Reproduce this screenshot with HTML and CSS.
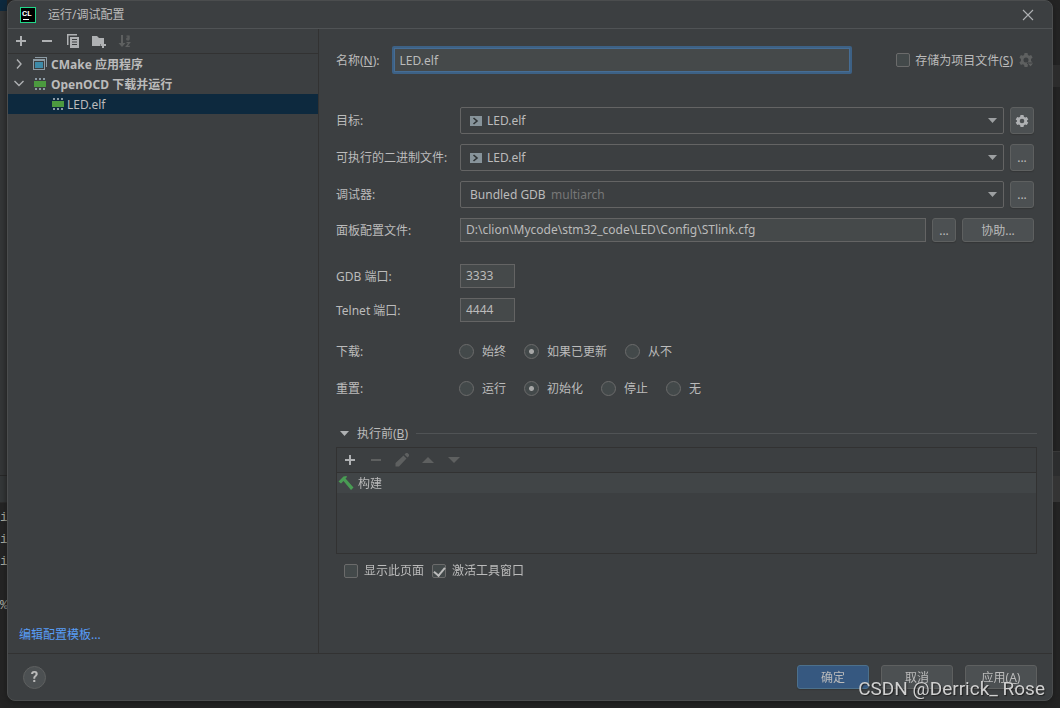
FILE: index.html
```html
<!DOCTYPE html>
<html lang="zh-CN">
<head>
<meta charset="utf-8">
<title>运行/调试配置</title>
<link rel="stylesheet" href="styles.css">
</head>
<body>
<div class="screen">
  <div class="edge edge-left" aria-hidden="true">
    <div class="edge-tab"></div>
    <div class="edge-tree"></div>
    <div class="edge-bar"></div>
    <div class="edge-code"><span>i</span><span>i</span><span>i</span><span></span><span>%</span></div>
  </div>

  <main class="dialog">
    <header class="titlebar">
      <svg class="logo" width="16" height="16" viewBox="0 0 16 16"><rect width="16" height="16" fill="#21d789"/><rect x="1" y="1" width="14" height="14" fill="#000"/><text class="logo-text" x="2" y="9">CL</text><path d="M3 12h6v1H3z" fill="#fff"/></svg>
      <h1 class="title">运行/调试配置</h1>
      <button class="close" aria-label="关闭"><svg width="12" height="12" viewBox="0 0 12 12"><path d="M1 1l10 10M11 1L1 11" stroke="#afb1b3" stroke-width="1.100"/></svg></button>
    </header>

    <div class="content">
      <aside class="sidebar">
        <div class="toolbar side-tools">
          <button class="tool" aria-label="添加"><svg width="16" height="16" viewBox="0 0 16 16"><path d="M7 3h2v4h4v2H9v4H7V9H3V7h4z" fill="#afb1b3"/></svg></button>
          <button class="tool" aria-label="移除"><svg width="16" height="16" viewBox="0 0 16 16"><path d="M3 7h10v2H3z" fill="#afb1b3"/></svg></button>
          <button class="tool" aria-label="复制"><svg width="16" height="16" viewBox="0 0 16 16"><path d="M2 1h10v1.500H3.500V12H2z" fill="#afb1b3"/><path fill-rule="evenodd" d="M5 4h9v11H5zM7 6v1h5V6zm0 2.500v1h5v-1zM7 11v1h5v-1z" fill="#afb1b3"/></svg></button>
          <button class="tool" aria-label="新建文件夹"><svg width="16" height="16" viewBox="0 0 16 16"><path d="M1 3h5l2 2h5v4h-2v2H9v2H1z" fill="#afb1b3"/><path d="M11 9h2v2h2v2h-2v2h-2v-2H9.500v-2H11z" fill="#afb1b3"/></svg></button>
          <button class="tool" aria-label="排序" disabled><svg width="16" height="16" viewBox="0 0 16 16"><path d="M4 2h2v8h2.500L5 14 1.500 10H4z" fill="#5e6060"/><path d="M9.500 3.200H12v3.600M12 5h-1.300a.9.9 0 0 0 0 1.800H12M9.500 9.700h3l-3 3.600h3.300" fill="none" stroke="#5e6060" stroke-width="1.300"/></svg></button>
        </div>
        <ul class="tree">
          <li class="node group">
            <svg width="16" height="16" viewBox="0 0 16 16"><path d="M6 3.500L10 8l-4 4.500" fill="none" stroke="#afb1b3" stroke-width="1.400"/></svg>
            <svg class="node-icon" width="16" height="16" viewBox="0 0 16 16"><path d="M3 1h12v10h-1V2H3z" fill="#8c9ba4"/><path fill-rule="evenodd" d="M1 3h12v11H1zm1 2v8h10V5z" fill="#8c9ba4"/><path d="M3 6h8v6H3z" fill="#3d8aa8"/></svg>
            <span>CMake 应用程序</span>
          </li>
          <li class="node group">
            <svg width="16" height="16" viewBox="0 0 16 16"><path d="M3.500 5L8 9.500 12.500 5" fill="none" stroke="#afb1b3" stroke-width="1.400"/></svg>
            <svg class="node-icon" width="16" height="16" viewBox="0 0 16 16"><path d="M2 5h12v6H2z" fill="#4c9a3f"/><path d="M3 2h2v2H3zm4 0h2v2H7zm4 0h2v2h-2zM3 12h2v2H3zm4 0h2v2H7zm4 0h2v2h-2z" fill="#8c9ba4"/></svg>
            <span>OpenOCD 下载并运行</span>
          </li>
          <li class="node leaf selected">
            <svg class="node-icon" width="16" height="16" viewBox="0 0 16 16"><path d="M2 5h12v6H2z" fill="#4c9a3f"/><path d="M3 2h2v2H3zm4 0h2v2H7zm4 0h2v2h-2zM3 12h2v2H3zm4 0h2v2H7zm4 0h2v2h-2z" fill="#8c9ba4"/></svg>
            <span>LED.elf</span>
          </li>
        </ul>
        <a class="link" href="#">编辑配置模板...</a>
      </aside>

      <form class="form">
        <div class="name-row">
          <label for="name">名称(<u>N</u>):</label>
          <input class="name-input" id="name" type="text" value="LED.elf" autofocus>
          <div class="store">
            <input class="check" id="store" type="checkbox">
            <label for="store">存储为项目文件(<u>S</u>)</label>
            <svg width="16" height="16" viewBox="0 0 16 16"><path fill-rule="evenodd" d="M6.500 1h3l.4 2 1.300.7 1.900-.7 1.500 2.600L13 7v2l1.600 1.400-1.500 2.600-1.900-.7-1.300.7-.4 2h-3l-.4-2-1.300-.7-1.900.7-1.500-2.600L3 9V7L1.400 5.600 2.900 3l1.900.7L6.100 3zM8 5.500a2.500 2.500 0 1 0 0 5 2.500 2.500 0 0 0 0-5z" fill="#5e6060"/><path d="M9 11h7l-3.500 4z" fill="#5e6060" stroke="#3c3f41"/></svg>
          </div>
        </div>

        <div class="fields">
          <label for="target">目标:</label>
          <div class="line">
            <div class="combo">
              <svg width="12" height="10" viewBox="0 0 12 10"><path d="M0 0h12v10H0z" fill="#87939a"/><path d="M3.500 2L7 5 3.500 8" fill="none" stroke="#2f3335" stroke-width="1.600"/></svg>
              <select class="wide" id="target"><option>LED.elf</option></select>
              <svg class="arrow" width="9" height="5" viewBox="0 0 9 5"><path d="M0 0h9L4.500 5z" fill="#9da0a2"/></svg>
            </div>
            <button class="btn square" type="button" aria-label="设置"><svg width="16" height="16" viewBox="0 0 16 16"><path fill-rule="evenodd" d="M6.500 2h3l.4 1.700 1.200.7 1.700-.5 1.500 2.500L13 7.500v1l1.300 1.100-1.500 2.500-1.700-.5-1.200.7-.4 1.700h-3l-.4-1.700-1.200-.7-1.700.5-1.500-2.500L3 8.500v-1L1.700 6.400l1.500-2.500 1.700.5 1.200-.7zM8 5.700a2.300 2.300 0 1 0 0 4.600 2.300 2.300 0 0 0 0-4.600z" fill="#afb1b3"/></svg></button>
          </div>

          <label for="binary">可执行的二进制文件:</label>
          <div class="line">
            <div class="combo">
              <svg width="12" height="10" viewBox="0 0 12 10"><path d="M0 0h12v10H0z" fill="#87939a"/><path d="M3.500 2L7 5 3.500 8" fill="none" stroke="#2f3335" stroke-width="1.600"/></svg>
              <select class="wide" id="binary"><option>LED.elf</option></select>
              <svg class="arrow" width="9" height="5" viewBox="0 0 9 5"><path d="M0 0h9L4.500 5z" fill="#9da0a2"/></svg>
            </div>
            <button class="btn square" type="button">...</button>
          </div>

          <label for="debugger">调试器:</label>
          <div class="line">
            <div class="combo">
              <select id="debugger"><option>Bundled GDB</option></select>
              <span class="hint">multiarch</span>
              <svg class="arrow" width="9" height="5" viewBox="0 0 9 5"><path d="M0 0h9L4.500 5z" fill="#9da0a2"/></svg>
            </div>
            <button class="btn square" type="button">...</button>
          </div>

          <label for="board">面板配置文件:</label>
          <div class="line short">
            <input class="text" id="board" type="text" value="D:\clion\Mycode\stm32_code\LED\Config\STlink.cfg">
            <button class="btn square" type="button">...</button>
            <button class="btn" type="button">协助...</button>
          </div>
        </div>

        <div class="fields ports">
          <label for="gdb">GDB 端口:</label>
          <input class="text port" id="gdb" type="text" value="3333">
          <label for="telnet">Telnet 端口:</label>
          <input class="text port" id="telnet" type="text" value="4444">
        </div>

        <div class="choices">
          <fieldset class="choice">
            <legend class="legend">下载:</legend>
            <label class="option"><input class="radio" type="radio" name="download">始终</label>
            <label class="option"><input class="radio" type="radio" name="download" checked>如果已更新</label>
            <label class="option"><input class="radio" type="radio" name="download">从不</label>
          </fieldset>
          <fieldset class="choice">
            <legend class="legend">重置:</legend>
            <label class="option"><input class="radio" type="radio" name="reset">运行</label>
            <label class="option"><input class="radio" type="radio" name="reset" checked>初始化</label>
            <label class="option"><input class="radio" type="radio" name="reset">停止</label>
            <label class="option"><input class="radio" type="radio" name="reset">无</label>
          </fieldset>
        </div>

        <section class="before">
          <h2 class="before-title"><svg width="9" height="5" viewBox="0 0 9 5"><path d="M0 0h9L4.500 5z" fill="#afb1b3"/></svg><span>执行前(<u>B</u>)</span></h2>
          <div class="tasks">
            <div class="toolbar task-tools">
              <button class="tool" type="button" aria-label="添加"><svg width="16" height="16" viewBox="0 0 16 16"><path d="M7 3h2v4h4v2H9v4H7V9H3V7h4z" fill="#afb1b3"/></svg></button>
              <button class="tool" type="button" aria-label="移除" disabled><svg width="16" height="16" viewBox="0 0 16 16"><path d="M3 7h10v2H3z" fill="#5e6060"/></svg></button>
              <button class="tool" type="button" aria-label="编辑" disabled><svg width="16" height="16" viewBox="0 0 16 16"><path d="M1.500 14.500v-3.500L9.500 3.500 12.500 6.500 5 14.500zM10.500 2.500L12 1h1.500L15 2.500V4l-1.500 1.500z" fill="#5e6060"/></svg></button>
              <button class="tool" type="button" aria-label="上移" disabled><svg width="16" height="16" viewBox="0 0 16 16"><path d="M2 11h12L8 5z" fill="#5e6060"/></svg></button>
              <button class="tool" type="button" aria-label="下移" disabled><svg width="16" height="16" viewBox="0 0 16 16"><path d="M2 5h12l-6 6z" fill="#5e6060"/></svg></button>
            </div>
            <ul class="task-list">
              <li class="task"><svg width="16" height="16" viewBox="0 0 16 16"><path d="M.5 6.500L5.500 1.500 8.500 1 9 2 7.500 3.500 15.500 12.500 13 15 5.500 6 3 8.500z" fill="#499c54"/></svg><span>构建</span></li>
            </ul>
          </div>
          <div class="after">
            <label class="tick"><input class="check" type="checkbox">显示此页面</label>
            <label class="tick"><input class="check" type="checkbox" checked>激活工具窗口</label>
          </div>
        </section>
      </form>
    </div>

    <footer class="footer">
      <button class="help" aria-label="帮助">?</button>
      <button class="btn primary">确定</button>
      <button class="btn">取消</button>
      <button class="btn">应用(<u>A</u>)</button>
    </footer>
  </main>

  <div class="edge edge-right" aria-hidden="true">
    <div class="edge-mark"></div>
    <div class="edge-head"></div>
    <div class="edge-strip"></div>
  </div>
  <div class="watermark">CSDN @Derrick_ Rose</div>
</div>
</body>
</html>
```
FILE: styles.css
```css
* { box-sizing: border-box; }

body {
  margin: 0;
  background: #242424;
  color: #bbbbbb;
  font: 12px/17px "Noto Sans", "Noto Sans CJK SC", sans-serif;
}

h1, h2, ul { margin: 0; padding: 0; font-size: 12px; font-weight: 400; list-style: none; }

button, input, select { margin: 0; font: inherit; color: inherit; }

svg { display: block; flex: none; }

.screen {
  position: relative;
  display: grid;
  grid-template-columns: 7px minmax(0, 1fr) 7px;
  min-height: 100vh;
  overflow: hidden;
}

/* Editor window behind the dialog */
.edge { display: flex; flex-direction: column; overflow: hidden; }
.edge-tab { height: 11px; background: #0d293e; }
.edge-tree { height: 464px; background: #343637; }
.edge-bar { height: 28px; background: #343738; border-top: 1px solid #282828; border-bottom: 1px solid #2c2c2c; }
.edge-code { padding-top: 4px; font: 13px/22px "Liberation Mono", monospace; color: #b4b4aa; }
.edge-code span { display: block; height: 22px; }
.edge-mark { height: 22px; margin-top: 65px; background: #2c2c2c; }
.edge-head { height: 25px; margin-top: 364px; background: #2c2d2e; border-top: 1px solid #383838; }
.edge-strip { height: 26px; background: #343434; }

.dialog {
  display: flex;
  flex-direction: column;
  margin-bottom: 7px;
  background: #3c3f41;
  border: 1px solid #4b4d4e;
  border-radius: 8px;
  box-shadow: 0 2px 6px #1a1a1a;
}

.titlebar {
  display: flex;
  align-items: center;
  gap: 12px;
  height: 28px;
  padding: 0 18px 0 12px;
  border-bottom: 1px solid #505355;
}
.logo-text { fill: #ffffff; font: 700 8px Roboto, sans-serif; }
.title { flex: 1; }
.close { padding: 0; border: 0; background: none; }

.content { flex: 1; display: flex; }

.sidebar {
  flex: none;
  width: 311px;
  display: flex;
  flex-direction: column;
  border-right: 1px solid #323232;
}

.toolbar { display: flex; align-items: center; gap: 10px; border-bottom: 1px solid #323232; }
.side-tools { height: 25px; padding-left: 5px; }
.tool { padding: 0; border: 0; background: none; }

.tree { flex: 1; }
.node { display: flex; align-items: center; height: 20px; padding-left: 3px; }
.node-icon { margin-right: 3px; }
.group { font-weight: 700; }
.group .node-icon { margin-left: 5px; }
.leaf { padding-left: 42px; }
.leaf .node-icon { margin-right: 1px; }
.selected { background: #0d293e; }

.link { margin: 0 auto 10px 11px; color: #589df6; text-decoration: none; }

.form { flex: 1; min-width: 0; padding: 17px 15px 0 17px; }

.name-row { display: flex; align-items: center; gap: 12px; }
.name-input {
  flex: 1;
  min-width: 0;
  height: 28px;
  padding: 0 6px;
  background: #45494a;
  border: 2px solid #3d6185;
  border-radius: 2px;
  outline: 0;
  box-shadow: inset 0 0 0 1px #466d94;
}
.store { display: flex; align-items: center; gap: 5px; margin-left: 32px; padding-right: 3px; }

.fields {
  display: grid;
  grid-template-columns: 124px minmax(0, 1fr);
  align-items: center;
  row-gap: 10px;
  margin-top: 33px;
}
.line { display: flex; gap: 6px; height: 27px; padding-right: 3px; }
.short { height: 24px; }

.combo {
  flex: 1;
  min-width: 0;
  display: flex;
  align-items: center;
  gap: 5px;
  padding: 0 6px 0 9px;
  border: 1px solid #646464;
  border-radius: 2px;
}
.combo select { appearance: none; padding: 0; border: 0; outline: 0; background: none; }
.combo .wide { flex: 1; min-width: 0; }
.hint { flex: 1; color: #777777; }

.text {
  flex: 1;
  min-width: 0;
  height: 24px;
  padding: 0 5px 1px;
  background: #45494a;
  border: 1px solid #646464;
  outline: 0;
}
.ports { margin-top: 22px; }
.port { width: 55px; }

.btn {
  width: 72px;
  height: 24px;
  padding: 0;
  background: #4c5052;
  border: 1px solid #5e6060;
  border-radius: 3px;
  box-shadow: 0 1px 1px #343637;
}
.square { display: grid; place-items: center; width: 24px; height: auto; }
.primary { background: #365880; border-color: #4c708c; }

.choices { display: grid; gap: 20px; margin-top: 21px; }
.choice { display: flex; gap: 18px; margin: 0; padding: 0; border: 0; }
.legend { float: left; width: 105px; padding: 0; }
.option { display: flex; align-items: center; gap: 8px; }
.radio {
  appearance: none;
  width: 15px;
  height: 15px;
  border: 1px solid #6b6b6b;
  border-radius: 50%;
  background: #43494a;
}
.radio:checked { background: radial-gradient(circle, #a7a7a7 0 2px, #43494a 3px); }

.before { margin-top: 28px; }
.before-title { display: flex; align-items: center; gap: 8px; padding-left: 4px; }
.before-title::after { content: ""; flex: 1; height: 1px; background: #505355; }
.tasks { min-height: 107px; margin-top: 5px; border: 1px solid #323232; }
.task-tools { height: 25px; padding-left: 5px; }
.task { display: flex; align-items: center; gap: 4px; height: 20px; padding-left: 1px; background: #414547; }

.after { display: flex; gap: 8px; margin-top: 8px; padding-left: 8px; }
.tick { display: flex; align-items: center; gap: 6px; }
.check {
  appearance: none;
  width: 14px;
  height: 14px;
  border: 1px solid #6b6b6b;
  border-radius: 2px;
  background: #43494a;
}
.check:checked::after {
  content: "";
  display: block;
  width: 5px;
  height: 9px;
  margin: 0 auto;
  border: solid #bbbbbb;
  border-width: 0 2px 2px 0;
  transform: rotate(40deg);
}

.footer {
  display: flex;
  align-items: center;
  gap: 12px;
  height: 47px;
  padding: 0 15px;
  border-top: 1px solid #323232;
}
.help {
  width: 23px;
  height: 23px;
  margin-right: auto;
  padding: 0;
  border: 1px solid #5e6060;
  border-radius: 50%;
  background: #4c5052;
  font: 700 15px/20px Roboto, sans-serif;
}

.watermark {
  position: absolute;
  right: 15px;
  bottom: 8px;
  color: #d0d0d0;
  font: 19px/22px Roboto, sans-serif;
  text-shadow: 1px 1px 1px #222222;
  pointer-events: none;
}
```
